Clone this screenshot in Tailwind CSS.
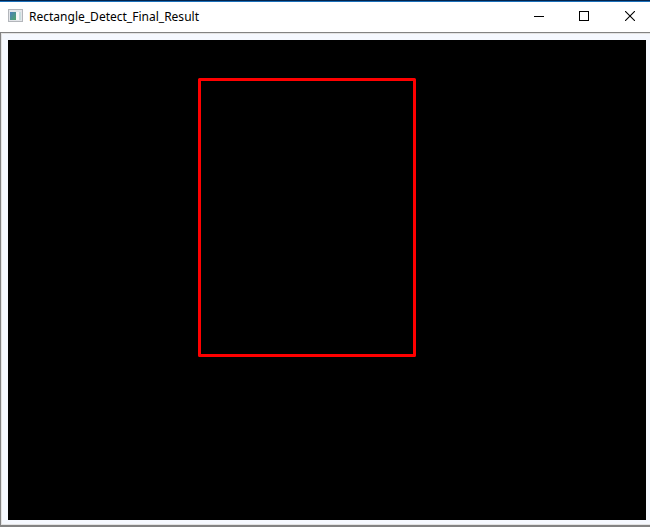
<!DOCTYPE html>
<html lang="en">
<head>
<meta charset="utf-8">
<title>Rectangle_Detect_Final_Result</title>
<script src="https://cdn.jsdelivr.net/npm/@tailwindcss/browser@4"></script>
</head>
<body class="flex h-[527px] w-[650px] flex-col overflow-hidden bg-white">
  <div class="h-px shrink-0 bg-[#03234b]"></div>
  <div class="h-px shrink-0 bg-[#1a6fb9]"></div>
  <header class="flex h-[30px] shrink-0 items-center bg-white pl-2">
    <svg class="mb-[3px] h-[13px] w-[15px] shrink-0" viewBox="0 0 15 13" shape-rendering="crispEdges">
      <defs>
        <linearGradient id="pane" x1="0" y1="0" x2="1" y2="1"><stop offset="0" stop-color="#4b7fbd"/><stop offset="1" stop-color="#4fa568"/></linearGradient>
      </defs>
      <rect width="15" height="13" fill="#b3b6bb"/>
      <rect x="1" y="1" width="13" height="11" fill="#e4e6ea"/>
      <rect x="2" y="3" width="6" height="8" fill="url(#pane)"/>
      <rect x="8" y="3" width="3" height="8" fill="#f7f7f7"/>
      <rect x="11" y="3" width="2" height="8" fill="#c9dedf"/>
    </svg>
    <h1 class="ml-1.5 whitespace-nowrap font-['Noto_Sans','Open_Sans',sans-serif] text-[12px] leading-[18px] text-black"><svg class="block h-[18px] w-[172px] overflow-visible" viewBox="0 0 172 18"><text x="0" y="13" textLength="170" lengthAdjust="spacingAndGlyphs">Rectangle_Detect_Final_Result</text></svg></h1>
    <div class="ml-auto flex h-full">
      <div class="flex w-[45px] items-center justify-center"><svg class="mb-[2px] h-[10px] w-[11px]" viewBox="0 0 11 10" shape-rendering="crispEdges"><path d="M1 5.5h10" stroke="#000"/></svg></div>
      <div class="flex w-[46px] items-center justify-center"><svg class="mb-[2px] h-[10px] w-[10px]" viewBox="0 0 10 10" shape-rendering="crispEdges"><path d="M.5.5h9v9h-9z" fill="none" stroke="#000"/></svg></div>
      <div class="flex w-[43px] items-center pl-[18px]"><svg class="mb-[2px] h-[10px] w-[10px]" viewBox="0 0 10 10"><path d="M0 0l10 10M10 0L0 10" stroke="#000" stroke-width="1.1"/></svg></div>
    </div>
  </header>
  <main class="flex min-h-0 grow flex-col border-t border-b-2 border-l border-t-[#828282] border-b-[#828282] border-l-[#828282]">
    <div class="grow border-t border-b border-l border-[#e3e3e3] bg-[#f5f8fe] pt-1.5 pl-1.5">
      <svg class="block h-[480px] w-[638px] bg-black" viewBox="0 0 638 480">
        <path d="M191.5 39.5H406.5V315.5H191.5Z" fill="none" stroke="#f00" stroke-width="3" stroke-linejoin="round"/>
      </svg>
    </div>
  </main>
</body>
</html>
